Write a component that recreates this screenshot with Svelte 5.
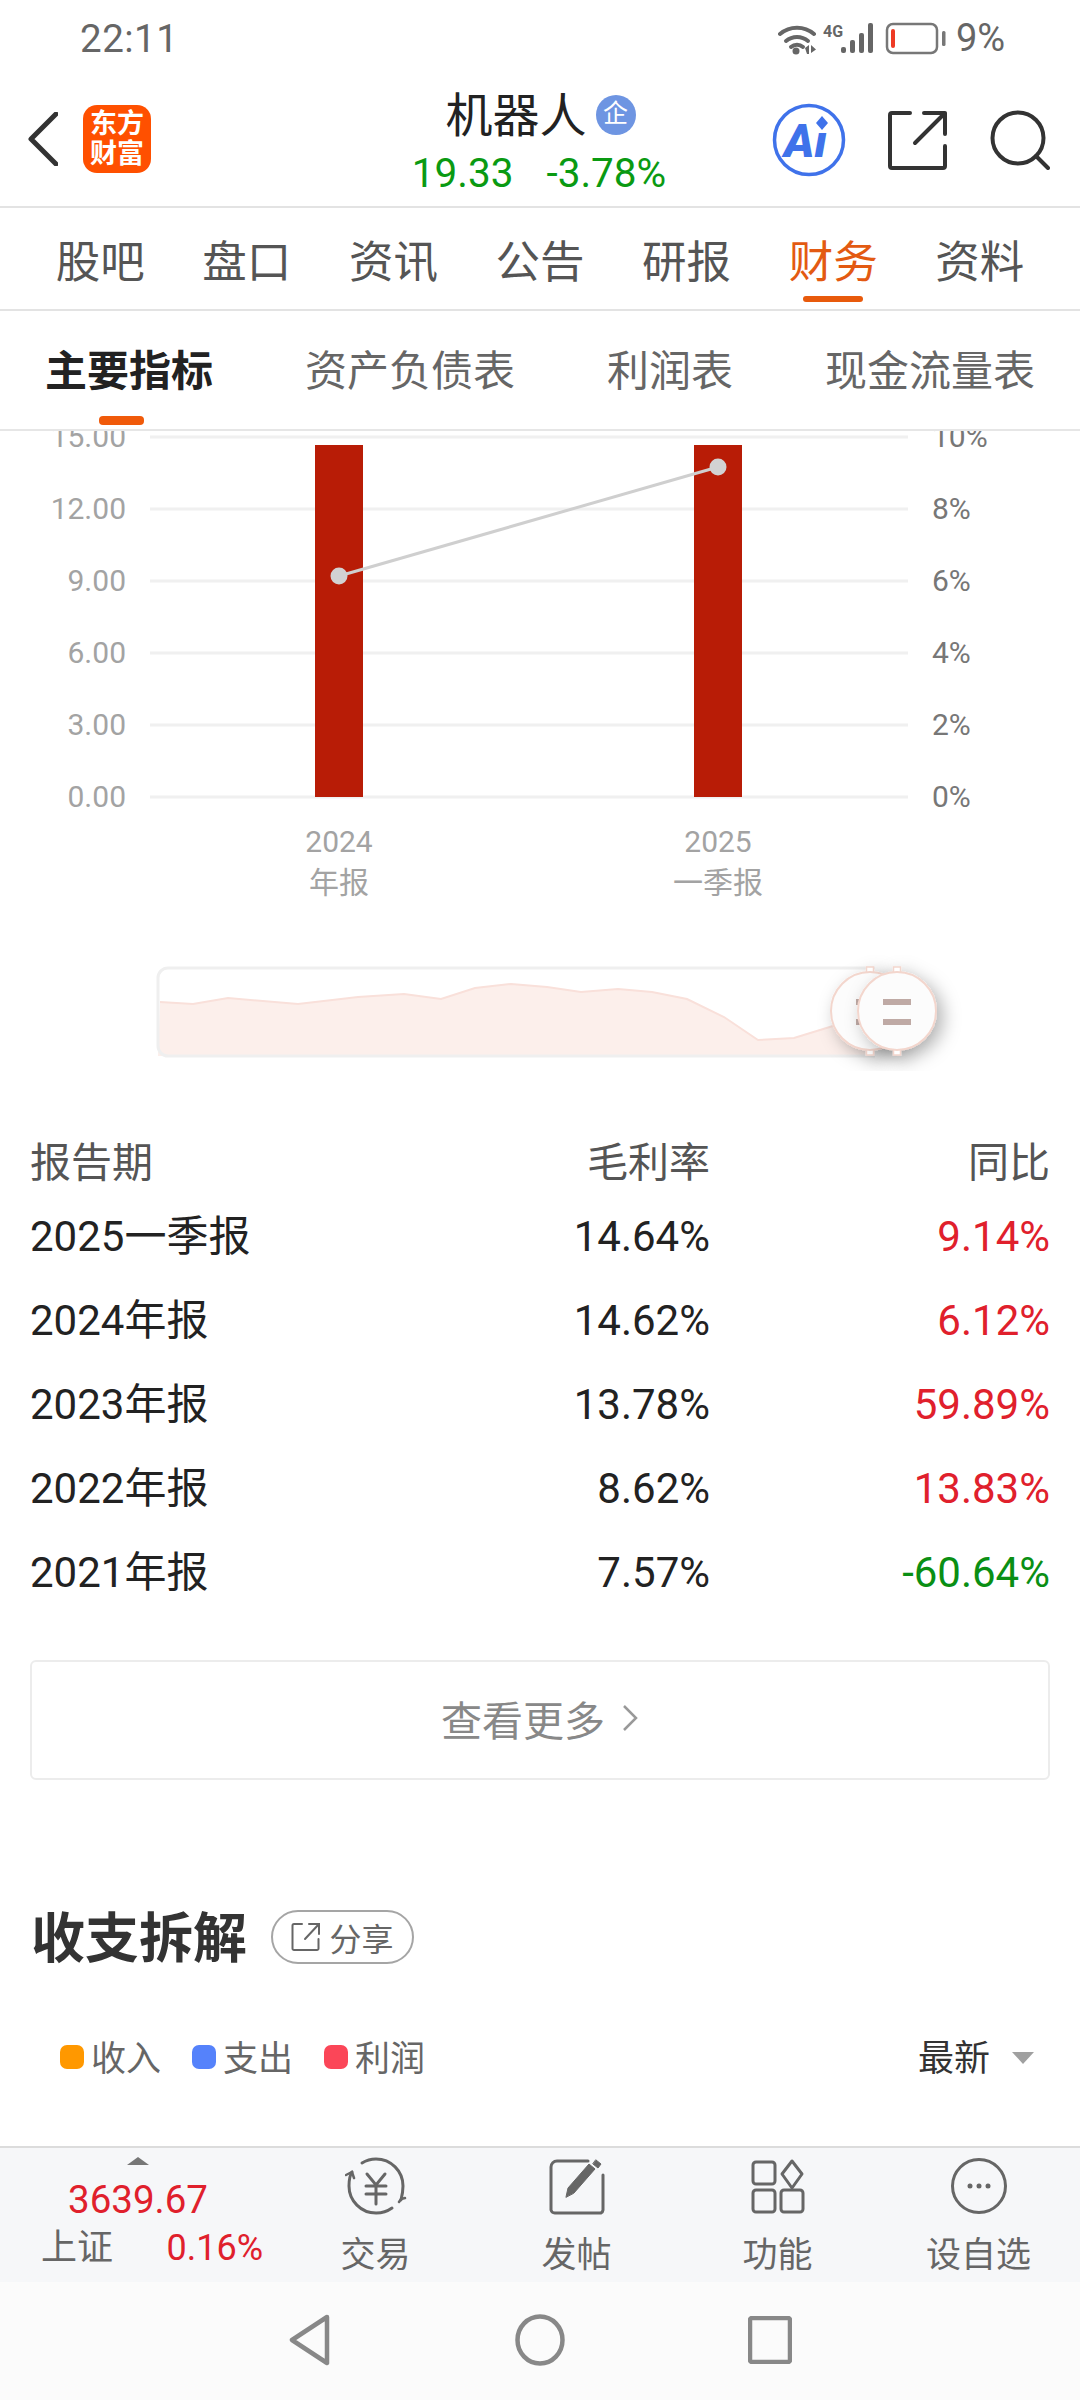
<script>
  const tabs = ['股吧','盘口','资讯','公告','研报','财务','资料'];
  const subs = ['主要指标','资产负债表','利润表','现金流量表'];
  const leftAxis = ['15.00','12.00','9.00','6.00','3.00','0.00'];
  const rightAxis = ['10%','8%','6%','4%','2%','0%'];
  const rows = [
    ['2025一季报','14.64%','9.14%','up'],
    ['2024年报','14.62%','6.12%','up'],
    ['2023年报','13.78%','59.89%','up'],
    ['2022年报','8.62%','13.83%','up'],
    ['2021年报','7.57%','-60.64%','down']
  ];
  const area = '160,1002 193,1004 228,998 298,1004 358,997 404,994 441,999 475,988 511,984 547,987 581,992 618,989 652,992 687,999 724,1017 758,1040 794,1038 833,1026 875,1008';
  const legend = [['收入','#ff9800'],['支出','#5582fb'],['利润','#fb4658']];
</script>

<div class="page">
  <div class="status">
    <span class="time">22:11</span>
    <svg class="sicons" width="240" height="44" viewBox="779 14 240 44">
      <g fill="none" stroke="#666" stroke-width="4" stroke-linecap="round">
        <path d="M781 32a26 26 0 0 1 34 0"/>
        <path d="M787 39a17 17 0 0 1 22 0"/>
        <path d="M792 45a9 9 0 0 1 12 0"/>
      </g>
      <circle cx="797" cy="49" r="3.5" fill="#666"/>
      <path d="M806 46l4-3v9h-2zM812 43l5 4.500-5 3.500z" fill="#666"/>
      <text x="824" y="35" class="fourg">4G</text>
      <g fill="#666">
        <rect x="842" y="45" width="5" height="6" rx="2"/>
        <rect x="851" y="38" width="5" height="13" rx="2"/>
        <rect x="860" y="31" width="5" height="20" rx="2"/>
        <rect x="869" y="21" width="5" height="30" rx="2"/>
      </g>
      <rect x="888" y="22" width="50" height="29" rx="6" fill="none" stroke="#777" stroke-width="2.500"/>
      <rect x="892" y="27" width="4" height="19" rx="2" fill="#ee3a24"/>
      <rect x="943" y="29" width="3.500" height="15" rx="1.500" fill="#777"/>
    </svg>
    <span class="batt">9%</span>
  </div>

  <header class="head">
    <div class="head-left">
      <svg width="30" height="54" viewBox="0 0 30 54"><path d="M28 2L3 27l25 25" fill="none" stroke="#333" stroke-width="5" stroke-linecap="round" stroke-linejoin="round"/></svg>
      <div class="logo"><span>东方</span><span>财富</span></div>
    </div>
    <div class="head-mid">
      <div class="name">机器人<span class="badge">企</span></div>
      <div class="price"><span>19.33</span><span>-3.78%</span></div>
    </div>
    <div class="head-right">
      <svg width="74" height="74" viewBox="0 0 74 74">
        <text x="12" y="54" class="ai">Ai</text>
        <rect x="38" y="8" width="24" height="20" fill="#fff"/>
        <circle cx="37" cy="37" r="34.500" fill="none" stroke="#3f72ea" stroke-width="3.500"/>
        <path d="M50 13l6 7-6 7-6-7z" fill="#3f72ea"/>
      </svg>
      <svg width="60" height="60" viewBox="0 0 60 60" fill="none" stroke="#333" stroke-width="4" stroke-linecap="round" stroke-linejoin="round">
        <path d="M22 3H4a2 2 0 0 0-2 2v51a2 2 0 0 0 2 2h51a2 2 0 0 0 2-2V36"/>
        <path d="M36 3h21v21M57 3L27 33"/>
      </svg>
      <svg width="60" height="60" viewBox="0 0 60 60" fill="none" stroke="#333" stroke-width="4" stroke-linecap="round">
        <circle cx="28" cy="28" r="25.500"/>
        <path d="M46 46l12 12"/>
      </svg>
    </div>
  </header>

  <nav class="tabs">
    {#each tabs as t}
      <div class="tab" class:on={t === '财务'}>{t}</div>
    {/each}
  </nav>

  <nav class="subs">
    {#each subs as s, i}
      <div class="sub" class:on={i === 0}>{s}</div>
    {/each}
  </nav>

  <main class="content">
    <svg class="chart" width="1080" height="500" viewBox="0 431 1080 500">
      {#each leftAxis as _, i}
        <rect x="150" y={435.500 + i * 72} width="758" height="3" fill="#f0f0f0"/>
      {/each}
      <rect x="315" y="445" width="48" height="352" fill="#b81c06"/>
      <rect x="694" y="445" width="48" height="352" fill="#b81c06"/>
      <line x1="339" y1="576" x2="718" y2="467" stroke="#cfcfcf" stroke-width="3"/>
      <circle cx="339" cy="576" r="8.500" fill="#d2d2d2"/>
      <circle cx="718" cy="467" r="8.500" fill="#d2d2d2"/>
      {#each leftAxis as t, i}
        <text x="126" y={447 + i * 72} text-anchor="end" class="axl">{t}</text>
      {/each}
      {#each rightAxis as t, i}
        <text x="932" y={447 + i * 72} class="axr">{t}</text>
      {/each}
      <text x="339" y="852" text-anchor="middle" class="axl">2024</text>
      <text x="339" y="893" text-anchor="middle" class="axl">年报</text>
      <text x="718" y="852" text-anchor="middle" class="axl">2025</text>
      <text x="718" y="893" text-anchor="middle" class="axl">一季报</text>
    </svg>

    <svg class="slider" width="1080" height="140" viewBox="0 931 1080 140">
      <defs>
        <filter id="sh" x="-60%" y="-60%" width="220%" height="220%">
          <feDropShadow dx="6" dy="6" stdDeviation="9" flood-color="#000" flood-opacity="0.3"/>
        </filter>
      </defs>
      <polygon points={`158,1056 ${area} 875,1056`} fill="#fcefeb"/>
      <polyline points={area} fill="none" stroke="#f9e0da" stroke-width="2"/>
      <path d="M875 968H168a10 10 0 0 0-10 10v68a10 10 0 0 0 10 10h707" fill="none" stroke="#efefef" stroke-width="3"/>
      {#each [870, 897] as cx}
        <g filter="url(#sh)">
          <rect x={cx - 3.500} y="967" width="7" height="88" fill="#fff" stroke="#f3d6cd" stroke-width="1.500"/>
          <circle {cx} cy="1011" r="39" fill="#fcfcfc" stroke="#f3d6cd" stroke-width="2"/>
          <rect x={cx - 14} y="999" width="28" height="6" fill="#bfaaa5"/>
          <rect x={cx - 14} y="1019" width="28" height="6" fill="#bfaaa5"/>
        </g>
      {/each}
    </svg>

    <section class="table">
      <div class="tr th"><span>报告期</span><span>毛利率</span><span>同比</span></div>
      {#each rows as r}
        <div class="tr"><span>{r[0]}</span><span>{r[1]}</span><span class={r[3]}>{r[2]}</span></div>
      {/each}
    </section>

    <div class="more">查看更多<svg width="18" height="30" viewBox="0 0 18 30"><path d="M3 3l12 12L3 27" fill="none" stroke="#999" stroke-width="2.500"/></svg></div>

    <div class="sec">
      <h2>收支拆解</h2>
      <div class="pill">
        <svg width="30" height="30" viewBox="0 0 30 30" fill="none" stroke="#666" stroke-width="2" stroke-linecap="round">
          <path d="M11 2H3a1.500 1.500 0 0 0-1.500 1.500v23A1.500 1.500 0 0 0 3 28h23a1.500 1.500 0 0 0 1.500-1.500V17"/>
          <path d="M18 2h10v10M28 2L14 17"/>
        </svg>
        <span>分享</span>
      </div>
    </div>

    <div class="legend">
      {#each legend as l}
        <div class="li"><i style="background:{l[1]}"></i>{l[0]}</div>
      {/each}
      <div class="latest">最新<b></b></div>
    </div>
  </main>

  <footer class="bar">
    <div class="index">
      <b class="caret"></b>
      <div class="ival">3639.67</div>
      <div class="irow"><span>上证</span><em>0.16%</em></div>
    </div>
    <div class="act">
      <svg width="62" height="60" viewBox="0 0 62 60" fill="none" stroke="#666" stroke-width="3" stroke-linecap="round">
        <path d="M17 7A26.500 26.500 0 0 1 31 3a27 27 0 0 1 27 27c0 6-1 10-2 14"/>
        <path d="M47 52A27 27 0 0 1 31 57 27 27 0 0 1 4 30c0-6 1-11 3-14"/>
        <path d="M1 19l6-3 2 6M54 46l2-3 4-1" stroke-width="2.500"/>
        <path d="M22 18l9 11 9-11M21 30h20M21 38h20M31 29v19"/>
      </svg>
      <span>交易</span>
    </div>
    <div class="act">
      <svg width="62" height="60" viewBox="0 0 62 60" fill="none" stroke="#666" stroke-width="3" stroke-linecap="round">
        <path d="M42 5H11a6 6 0 0 0-6 6v43a4 4 0 0 0 4 3h46a4 4 0 0 0 2-3V19"/>
        <path d="M20 41l2-9L43 8l6 5-21 24z" fill="#666" stroke-width="1"/>
        <path d="M50 4l5 4-3 4-5-4z" fill="#666" stroke-width="1"/>
      </svg>
      <span>发帖</span>
    </div>
    <div class="act">
      <svg width="62" height="60" viewBox="0 0 62 60" fill="none" stroke="#666" stroke-width="3" stroke-linejoin="round">
        <rect x="6" y="6" width="22" height="22" rx="3"/>
        <path d="M45 5l10 13-10 14-10-14z"/>
        <rect x="6" y="34" width="22" height="22" rx="3"/>
        <rect x="34" y="34" width="22" height="22" rx="3"/>
      </svg>
      <span>功能</span>
    </div>
    <div class="act">
      <svg width="62" height="60" viewBox="0 0 62 60" fill="none" stroke="#666" stroke-width="3">
        <circle cx="31" cy="30" r="26.500"/>
        <circle cx="22" cy="30" r="2.500" fill="#666" stroke="none"/>
        <circle cx="31" cy="30" r="2.500" fill="#666" stroke="none"/>
        <circle cx="40" cy="30" r="2.500" fill="#666" stroke="none"/>
      </svg>
      <span>设自选</span>
    </div>
  </footer>

  <div class="sysnav">
    <svg width="44" height="52" viewBox="0 0 44 52"><path d="M39 3L4 26l35 23z" fill="none" stroke="#888" stroke-width="4.500" stroke-linejoin="round"/></svg>
    <svg width="50" height="52" viewBox="0 0 50 52"><ellipse cx="25" cy="26" rx="22.500" ry="23.500" fill="none" stroke="#888" stroke-width="4.500"/></svg>
    <svg width="44" height="48" viewBox="0 0 44 48"><rect x="2" y="2" width="40" height="44" rx="2" fill="none" stroke="#888" stroke-width="4.500"/></svg>
  </div>
</div>

<style>
  :global(body) { margin: 0; background: #fff; }
  .page {
    width: 1080px; height: 2400px; display: flex; flex-direction: column; overflow: hidden;
    font-family: Roboto, "Noto Sans CJK SC", sans-serif; color: #222; background: #fff;
  }
  .status { height: 76px; flex: none; display: flex; align-items: center; padding: 0 76px 0 80px; box-sizing: border-box; }
  .time { font-size: 38.500px; color: #666; letter-spacing: 0.5px; }
  .sicons { margin-left: auto; margin-right: -62px; }
  .batt { font-size: 38px; color: #666; width: 48px; }
  .fourg { font: 700 16px Roboto, sans-serif; fill: #666; }

  .head { height: 132px; flex: none; box-sizing: border-box; display: grid; grid-template-columns: 1fr auto 1fr; align-items: center; border-bottom: 2px solid #e3e3e3; padding: 0 30px 0 28px; }
  .head-left { display: flex; align-items: center; gap: 25px; margin-top: -4px; }
  .logo { width: 68px; height: 68px; border-radius: 14px; background: #ff5000; color: #fff; display: flex; flex-direction: column; align-items: center; justify-content: center; font-size: 27px; font-weight: 700; line-height: 30px; }
  .head-mid { display: flex; flex-direction: column; align-items: center; margin-top: 8px; }
  .name { font-size: 47px; line-height: 60px; color: #222; display: flex; align-items: center; gap: 9px; padding-left: 3px; margin-top: -4px; }
  .badge { width: 40px; height: 40px; border-radius: 50%; background: #6e95e2; color: #fff; font-size: 25px; line-height: 38px; text-align: center; margin-top: -2px; }
  .price { display: flex; gap: 33px; font-size: 40.500px; line-height: 54px; color: #0a9a12; }
  .head-right { display: flex; align-items: center; justify-content: flex-end; gap: 42px; margin-top: -2px; }
  .ai { font: italic 900 46px Roboto, sans-serif; fill: #3f72ea; }

  .tabs { height: 103px; flex: none; display: grid; grid-template-columns: repeat(7, 1fr); padding: 0 27px; border-bottom: 2px solid #e3e3e3; box-sizing: border-box; }
  .tab { text-align: center; font-size: 44.500px; color: #555; line-height: 62px; padding-top: 24px; position: relative; }
  .tab.on { color: #e35a12; }
  .tab.on::after { content: ""; position: absolute; left: 43px; bottom: 7px; width: 60px; height: 6px; border-radius: 3px; background: #e85a0c; }

  .subs { height: 120px; display: flex; gap: 92px; padding: 0 45px; border-bottom: 2px solid #e6e6e6; box-sizing: border-box; flex: none; }
  .sub { font-size: 42px; color: #666; line-height: 60px; padding-top: 31px; position: relative; white-space: nowrap; }
  .sub.on { color: #222; font-weight: 700; }
  .sub.on::after { content: ""; position: absolute; left: 54px; top: 105px; width: 45px; height: 9px; border-radius: 4px; background: #f05a0a; }

  .content { flex: 1; min-height: 0; overflow: hidden; }
  .chart, .slider { display: block; }
  .axl { font: 30px Roboto, "Noto Sans CJK SC", sans-serif; fill: #a3a3a3; }
  .axr { font: 30px Roboto, "Noto Sans CJK SC", sans-serif; fill: #777; }

  .table { padding: 60px 30px 0; }
  .tr { display: grid; grid-template-columns: 1fr 340px 340px; height: 84px; align-items: center; font-size: 42px; line-height: 50px; color: #222; }
  .tr span:nth-child(2), .tr span:nth-child(3) { text-align: right; }
  .th { height: 64px; font-size: 41px; color: #555; }
  .up { color: #e0202c; }
  .down { color: #0a8f14; }

  .more { margin: 45px 30px 0; height: 120px; box-sizing: border-box; border: 2px solid #ececec; border-radius: 6px; padding-bottom: 5px; display: flex; align-items: center; justify-content: center; gap: 16px; font-size: 41px; color: #888; }

  .sec { margin: 130px 0 0 31px; display: flex; align-items: center; gap: 24px; height: 54px; }
  h2 { margin: 6px 0 0; font-size: 54px; font-weight: 700; color: #333; line-height: 54px; }
  .pill { width: 143px; height: 54px; box-sizing: border-box; border: 2px solid #a5a5a5; border-radius: 27px; display: flex; align-items: center; justify-content: center; gap: 8px; font-size: 32px; color: #666; }

  .legend { margin-top: 71px; height: 40px; display: flex; align-items: center; padding: 0 46px 0 60px; font-size: 35px; color: #666; }
  .li { display: flex; align-items: center; gap: 7px; margin-right: 31px; }
  .li i { width: 24px; height: 24px; border-radius: 7px; display: block; margin-top: 4px; }
  .latest { margin-left: auto; display: flex; align-items: center; gap: 22px; color: #333; font-size: 36px; }
  .latest b { width: 0; height: 0; border-left: 11px solid transparent; border-right: 11px solid transparent; border-top: 12px solid #a0a0a0; margin-top: 6px; }

  .bar { height: 136px; flex: none; box-sizing: border-box; border-top: 2px solid #dcdcdc; background: #f6f7f9; display: grid; grid-template-columns: 275px repeat(4, 201px); }
  .index { position: relative; padding-left: 41px; }
  .caret { position: absolute; left: 127px; top: 9px; width: 0; height: 0; border-left: 11px solid transparent; border-right: 11px solid transparent; border-bottom: 8px solid #777; }
  .ival { margin-top: 28px; text-align: center; font-size: 38.500px; line-height: 48px; color: #e0202c; width: 194px; }
  .irow { display: flex; justify-content: space-between; width: 222px; font-size: 36px; line-height: 48px; margin-top: 0; color: #666; }
  .irow em { font-style: normal; color: #e0202c; }
  .act { display: flex; flex-direction: column; align-items: center; color: #666; font-size: 35px; }
  .act svg { margin-top: 8px; }
  .act span { line-height: 46px; margin-top: 17px; }

  .sysnav { height: 118px; flex: none; background: #fbfbfb; display: grid; grid-template-columns: 230px 230px 230px; justify-content: center; justify-items: center; align-items: center; }
  .sysnav svg { margin-top: -3px; }
</style>
